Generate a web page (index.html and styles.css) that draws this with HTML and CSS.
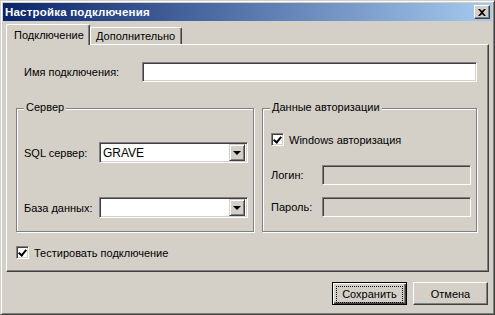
FILE: index.html
```html
<!DOCTYPE html>
<html lang="ru">
<head>
    <meta charset="UTF-8">
    <title>Настройка подключения</title>
    <link rel="stylesheet" href="styles.css">
</head>
<body>
    <div class="window">
        <div class="titlebar">
            <span class="title">Настройка подключения</span>
            <span class="close-btn">
                <svg width="8" height="7" viewBox="0 0 8 7"><path d="M0 0h2l2 2 2-2h2L5 3.5 8 7H6L4 5 2 7H0l3-3.5z" fill="#000"/></svg>
            </span>
        </div>

        <div class="tabs">
            <div class="tab active">Подключение</div>
            <div class="tab">Дополнительно</div>
        </div>

        <div class="panel">
            <div class="name-row">
                <label class="name-label">Имя подключения:</label>
                <div class="field"></div>
            </div>

            <div class="groups">
                <div class="group server">
                    <span class="caption">Сервер</span>
                    <div class="row">
                        <label class="row-label">SQL сервер:</label>
                        <div class="combo">
                            <span class="combo-text">GRAVE</span>
                            <span class="combo-btn"><span class="arrow"></span></span>
                        </div>
                    </div>
                    <div class="row row-db">
                        <label class="row-label">База данных:</label>
                        <div class="combo">
                            <span class="combo-text"></span>
                            <span class="combo-btn"><span class="arrow"></span></span>
                        </div>
                    </div>
                </div>

                <div class="group auth">
                    <span class="caption">Данные авторизации</span>
                    <div class="check-row">
                        <span class="checkbox checked"></span>
                        <span>Windows авторизация</span>
                    </div>
                    <div class="row row-login">
                        <label class="auth-label">Логин:</label>
                        <div class="field disabled"></div>
                    </div>
                    <div class="row row-pass">
                        <label class="auth-label">Пароль:</label>
                        <div class="field disabled"></div>
                    </div>
                </div>
            </div>

            <div class="check-row test-row">
                <span class="checkbox checked"></span>
                <span>Тестировать подключение</span>
            </div>
        </div>

        <div class="footer">
            <button class="btn default"><span class="focus">Сохранить</span></button>
            <button class="btn">Отмена</button>
        </div>
    </div>
</body>
</html>
```

FILE: styles.css
```css
body {
    margin: 0;
    padding: 0;
    background-color: #d4d0c8;
    font-family: "Liberation Sans", Arial, sans-serif;
    font-size: 11px;
    color: #000;
}

.window {
    width: 495px;
    height: 315px;
    box-sizing: border-box;
    border: 1px solid;
    border-color: #d4d0c8 #404040 #404040 #d4d0c8;
    box-shadow: inset 1px 1px #fff, inset -1px -1px #808080;
    padding: 2px;
    background-color: #d4d0c8;
}

/* title bar */
.titlebar {
    height: 18px;
    display: flex;
    align-items: center;
    justify-content: space-between;
    padding: 0 2px 0 2px;
    background: linear-gradient(to right, #0a246a, #a6caf0);
}

.title {
    color: #fff;
    font-weight: bold;
    font-size: 11.5px;
    letter-spacing: 0.2px;
}

.close-btn {
    width: 16px;
    height: 14px;
    box-sizing: border-box;
    display: flex;
    align-items: center;
    justify-content: center;
    background-color: #d4d0c8;
    border: 1px solid;
    border-color: #fff #404040 #404040 #fff;
    box-shadow: inset -1px -1px #808080;
}

/* tabs */
.tabs {
    display: flex;
    align-items: flex-end;
    margin-top: 3px;
    padding-left: 3px;
    height: 20px;
    position: relative;
    z-index: 1;
}

.tab {
    height: 17px;
    box-sizing: border-box;
    padding: 2px 5px 0 5px;
    border: 1px solid;
    border-bottom: none;
    border-color: #fff #404040 #404040 #fff;
    box-shadow: inset -1px 0 #808080;
    border-radius: 2px 2px 0 0;
    background-color: #d4d0c8;
}

.tab.active {
    height: 21px;
    margin-bottom: -1px;
    width: 84px;
    padding: 4px 7px 0 7px;
}

.tab:not(.active) {
    width: 92px;
}

/* tab page */
.panel {
    margin: 0 3px;
    height: 228px;
    box-sizing: border-box;
    border: 1px solid;
    border-color: #fff #404040 #404040 #fff;
    box-shadow: inset -1px -1px #808080;
    padding: 17px 11px 0 9px;
}

.name-row {
    display: flex;
    align-items: center;
    padding-left: 8px;
    height: 20px;
}

.name-label {
    width: 118px;
}

.field {
    flex: 1;
    height: 20px;
    box-sizing: border-box;
    background-color: #fff;
    border: 1px solid;
    border-color: #808080 #fff #fff #808080;
    box-shadow: inset 1px 1px #404040, inset -1px -1px #d4d0c8;
}

.field.disabled {
    background-color: #d4d0c8;
    flex: none;
    width: 149px;
}

/* group boxes */
.groups {
    display: flex;
    gap: 8px;
    margin-top: 26px;
}

.group {
    position: relative;
    height: 124px;
    box-sizing: border-box;
    border: 1px solid #808080;
    box-shadow: inset 1px 1px #fff, 1px 1px #fff;
}

.group.server {
    width: 238px;
    padding: 33px 0 0 7px;
}

.group.auth {
    width: 215px;
    padding: 24px 0 0 8px;
}

.caption {
    position: absolute;
    top: -8px;
    left: 7px;
    padding: 0 2px;
    background-color: #d4d0c8;
}

.row {
    display: flex;
    align-items: center;
}

.row-label {
    width: 75px;
}

.row-db {
    margin-top: 34px;
}

.auth-label {
    width: 51px;
}

.row-login {
    margin-top: 19px;
}

.row-pass {
    margin-top: 12px;
}

/* combo boxes */
.combo {
    width: 149px;
    height: 21px;
    box-sizing: border-box;
    display: flex;
    align-items: center;
    justify-content: space-between;
    background-color: #fff;
    border: 1px solid;
    border-color: #808080 #fff #fff #808080;
    box-shadow: inset 1px 1px #404040, inset -1px -1px #d4d0c8;
    padding: 2px;
}

.combo-text {
    padding-left: 1px;
    font-size: 12px;
}

.combo-btn {
    width: 16px;
    height: 17px;
    box-sizing: border-box;
    display: flex;
    align-items: center;
    justify-content: center;
    background-color: #d4d0c8;
    border: 1px solid;
    border-color: #d4d0c8 #404040 #404040 #d4d0c8;
    box-shadow: inset 1px 1px #fff, inset -1px -1px #808080;
}

.arrow {
    width: 0;
    height: 0;
    border-left: 4px solid transparent;
    border-right: 4px solid transparent;
    border-top: 4px solid #000;
    margin-top: 1px;
}

/* check boxes */
.check-row {
    display: flex;
    align-items: center;
    gap: 5px;
    height: 13px;
}

.checkbox {
    width: 13px;
    height: 13px;
    box-sizing: border-box;
    background-color: #fff;
    border: 1px solid;
    border-color: #808080 #fff #fff #808080;
    box-shadow: inset 1px 1px #404040, inset -1px -1px #d4d0c8;
    position: relative;
}

.checkbox.checked::after {
    content: "";
    position: absolute;
    left: 3px;
    top: 1px;
    width: 3px;
    height: 6px;
    border: solid #000;
    border-width: 0 2px 2px 0;
    transform: rotate(40deg);
}

.test-row {
    margin-top: 14px;
}

/* buttons */
.footer {
    display: flex;
    justify-content: flex-end;
    gap: 6px;
    margin-top: 10px;
    padding-right: 4px;
}

.btn {
    width: 75px;
    height: 23px;
    box-sizing: border-box;
    font-family: "Liberation Sans", Arial, sans-serif;
    font-size: 11px;
    color: #000;
    background-color: #d4d0c8;
    border: 1px solid;
    border-color: #fff #404040 #404040 #fff;
    box-shadow: inset -1px -1px #808080;
    padding: 0;
}

.btn.default {
    border: 1px solid #000;
    box-shadow: inset 1px 1px #fff, inset -1px -1px #404040, inset -2px -2px #808080;
    padding: 3px;
}

.focus {
    display: block;
    height: 15px;
    line-height: 15px;
    border: 1px dotted #000;
}
```
